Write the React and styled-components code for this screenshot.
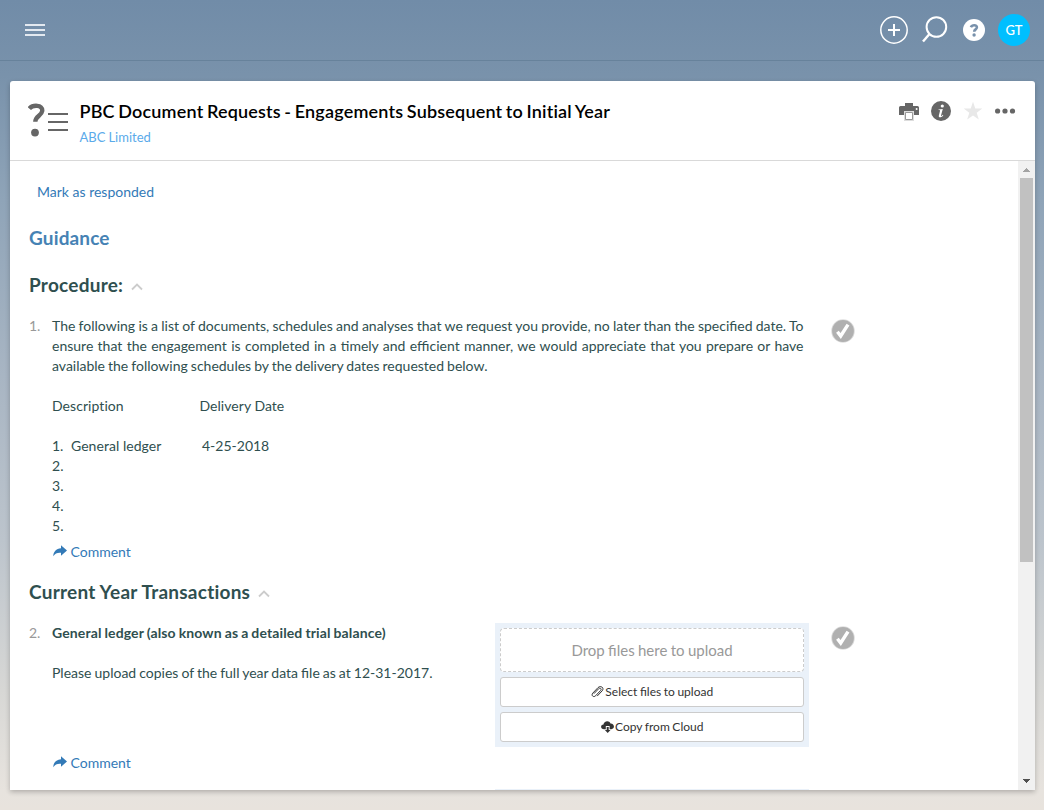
import React from 'react';
import styled, { createGlobalStyle } from 'styled-components';

const GlobalStyle = createGlobalStyle`
  * { box-sizing: border-box; }
  body {
    margin: 0;
    font-family: Lato, "Liberation Sans", sans-serif;
    font-size: 14px;
    line-height: 20px;
    color: #2f4f4f;
    overflow: hidden;
  }
  svg { display: block; flex: none; }
`;

const Page = styled.div`
  display: flex;
  flex-direction: column;
  height: 810px;
  background: linear-gradient(to bottom, #718ca8 0, #7992ab 75px, #8fa4b8 200px, #a8b5c3 375px, #bcc4cc 540px, #d7d7d5 690px, #e7e3de 790px, #e8e3dd 810px);
`;

const TopBar = styled.header`
  display: flex;
  align-items: center;
  justify-content: space-between;
  height: 61px;
  padding: 0 14px 1px 25px;
  border-bottom: 1px solid #67829b;
`;

const TopActions = styled.div`
  display: flex;
  align-items: center;
`;

const Avatar = styled.div`
  width: 32px;
  height: 32px;
  margin-left: 13px;
  border-radius: 50%;
  background: #00bfff;
  color: #fff;
  font-size: 13px;
  font-weight: 500;
  line-height: 33px;
  text-align: center;
`;

const Card = styled.main`
  display: flex;
  flex-direction: column;
  width: 1025px;
  height: 709px;
  margin: 20px 0 0 10px;
  border-radius: 3px 3px 0 0;
  background: #fff;
  box-shadow: 0 2px 5px rgba(0, 0, 0, 0.24);
  overflow: hidden;
`;

const CardHeader = styled.div`
  display: flex;
  height: 80px;
  padding: 20px 19px 0 18px;
  border-bottom: 1px solid #d9d9d9;
`;

const Titles = styled.div`
  flex: 1;
  padding-left: 10.5px;
`;

const Title = styled.h1`
  margin: -1px 0 0;
  color: #000;
  font-size: 18px;
  line-height: 22px;
  font-weight: 600;
  letter-spacing: 0.19px;
  word-spacing: -1.2px;
`;

const Client = styled.div`
  margin-top: 6px;
  color: #5aaaea;
  font-size: 13px;
  line-height: 18px;
  word-spacing: -0.3px;
`;

const HeaderTools = styled.div`
  display: flex;
  height: 20px;
  align-items: center;
`;

const Body = styled.div`
  display: flex;
  flex: 1;
  min-height: 0;
`;

const Content = styled.div`
  width: 1008px;
  height: 629px;
  padding: 21px 0 0 19px;
  overflow: hidden;
`;

const MarkLink = styled.a`
  display: block;
  margin-left: 8px;
  color: #337ab7;
`;

const Guidance = styled.h2`
  margin: 25px 0 0;
  color: #4682b4;
  font-size: 19px;
  line-height: 22px;
  font-weight: 700;
  letter-spacing: 0.15px;
`;

const Section = styled.h2`
  display: flex;
  align-items: center;
  gap: 8px;
  margin: ${(p) => p.$top}px 0 0;
  font-size: 19px;
  line-height: 22px;
  font-weight: 700;
  letter-spacing: 0.24px;
`;

const Item = styled.section`
  display: flex;
  height: ${(p) => p.$height}px;
  margin-top: 20px;
`;

const Number = styled.div`
  width: 23px;
  color: #999;
`;

const Copy = styled.div`
  display: flex;
  flex-direction: column;
  width: ${(p) => p.$width}px;
`;

const Paragraph = styled.p`
  width: ${(p) => (p.$width ? `${p.$width}px` : 'auto')};
  margin: 0 0 20px;
  text-align: justify;
  word-spacing: -0.55px;
`;

const Lead = styled.b`
  letter-spacing: 0.12px;
`;

const Columns = styled.div`
  display: flex;
  margin-bottom: ${(p) => p.$bottom || 0}px;
  white-space: pre;
`;

const Column = styled.div`
  width: ${(p) => p.$width}px;
  letter-spacing: ${(p) => p.$tracking || 0}px;
`;

const CommentLink = styled.a`
  display: flex;
  align-items: center;
  gap: 3.5px;
  margin: auto 0 0 1px;
  color: #337ab7;
`;

const CheckHolder = styled.div`
  margin: 3px 0 0 ${(p) => p.$left}px;
`;

const UploadPanel = styled.div`
  display: flex;
  flex-direction: column;
  gap: 5px;
  width: 314px;
  height: 124px;
  padding: 5px;
  background: #eaf1f9;
`;

const DropZone = styled.div`
  height: 44px;
  border: 1px dashed #ccc;
  border-radius: 4px;
  background: #fff;
  color: #999;
  font-size: 15px;
  line-height: 42px;
  text-align: center;
  word-spacing: -0.5px;
`;

const UploadButton = styled.button`
  display: flex;
  align-items: center;
  justify-content: center;
  gap: ${(p) => p.$gap}px;
  height: 30px;
  padding: 0;
  border: 1px solid #ccc;
  border-radius: 3px;
  background: #fff;
  color: #333;
  font: 12px/18px Lato, sans-serif;
  word-spacing: -0.5px;
`;

const NextPanel = styled.div`
  width: 314px;
  height: 20px;
  margin: 16px 0 0 466px;
  background: #eaf1f9;
`;

const Scrollbar = styled.div`
  display: flex;
  flex-direction: column;
  align-items: center;
  width: 17px;
  background: #f1f1f1;
`;

const Thumb = styled.div`
  width: 13px;
  height: 384px;
  margin-bottom: auto;
  background: #c1c1c1;
`;

const Spaced = styled.span`
  display: block;
  margin-left: ${(p) => p.$left}px;
`;

const MenuIcon = () => (
  <svg width="20" height="12" fill="#e3e9f0"><path d="M0 0h20v2H0zM0 5h20v2H0zM0 10h20v2H0z" /></svg>
);

const AddIcon = () => (
  <svg width="28" height="28" fill="none" stroke="#fff">
    <circle cx="14" cy="14" r="13.2" strokeWidth="1.5" />
    <path d="M14 8v12M8 14h12" strokeWidth="2" />
  </svg>
);

const SearchIcon = () => (
  <svg width="26" height="27" fill="none" stroke="#fff" strokeWidth="2">
    <circle cx="14.4" cy="11" r="9.8" /><path d="M7.5 18L1 25.5" strokeWidth="2.4" />
  </svg>
);

const HelpIcon = () => (
  <svg width="22" height="22">
    <circle cx="11" cy="11" r="11" fill="#fff" />
    <path d="M7.900 8.200C9 5.600 14 5.400 13.900 8.300c0 2.200-2.700 2-2.700 4.500" fill="none" stroke="#7891ab" strokeWidth="2.600" />
    <circle cx="11.100" cy="16" r="1.700" fill="#7891ab" />
  </svg>
);

const QueryIcon = () => (
  <svg width="41" height="38" fill="none" stroke="#666">
    <path d="M1.300 7.600C4.500 3.800 15 3.300 14.200 10c-.5 4.700-7 5.100-6.900 10.800" strokeWidth="4.400" />
    <circle cx="7" cy="31.600" r="3.900" fill="#666" stroke="none" />
    <path d="M20 13h20M20 21h20M20 29h20" strokeWidth="2" />
  </svg>
);

const PrintIcon = () => (
  <svg width="20" height="20">
    <path d="M6 2h8v3H6z" fill="#666" />
    <path d="M1.500 5h17A1.500 1.500 0 0 1 20 6.500V14H0V6.500A1.500 1.500 0 0 1 1.500 5z" fill="#666" />
    <circle cx="17.600" cy="8" r="1" fill="#fff" />
    <path d="M5 10h10v10H5z" fill="#ddd" />
    <path d="M6.500 11.500h7v7h-7z" fill="#fff" stroke="#999" />
  </svg>
);

const InfoIcon = () => (
  <svg width="20" height="20">
    <circle cx="10" cy="10" r="10" fill="#666" />
    <circle cx="11.300" cy="5" r="1.600" fill="#fff" />
    <path d="M7.500 8.400l4.300-.5-1.800 6.600c-.1.8.6.6 1.800-.8l.5.5c-1.500 2.400-4.900 3-4.500.5l1.300-5.100c.1-.6-.3-.7-1.600-.7z" fill="#fff" />
  </svg>
);

const StarIcon = () => (
  <svg width="20" height="20">
    <path d="M10 .8l2.300 6.600 7 .1-5.600 4.200 2.100 6.900-5.800-4.100-5.800 4.100 2.100-6.900L.7 7.500l7-.1z" fill="#e8e8e8" />
  </svg>
);

const MoreIcon = () => (
  <svg width="21" height="20" fill="#666">
    <circle cx="2.600" cy="10" r="2.600" /><circle cx="10" cy="10" r="2.600" /><circle cx="17.500" cy="10" r="2.600" />
  </svg>
);

const Caret = () => (
  <svg width="12" height="11" fill="none" stroke="#ccc" strokeWidth="1.800"><path d="M1 9.500l5-5 5 5" /></svg>
);

const ShareIcon = () => (
  <svg width="14" height="14" fill="#337ab7">
    <path d="M8 .3L14 5.500 8 10.700V7.700C4.500 7.400 2 8.300.3 11.300.2 7 3.200 3.500 8 3.300z" />
  </svg>
);

const CheckIcon = () => (
  <svg width="24" height="24">
    <circle cx="12" cy="12" r="11.800" fill="#ddd" />
    <circle cx="12" cy="12" r="10.900" fill="#b0b0b0" />
    <path d="M6.400 12.800l3.300 4.200L17 5.700" fill="none" stroke="#fff" strokeWidth="3.400" />
  </svg>
);

const ClipIcon = () => (
  <svg width="13" height="14" viewBox="0.500 0.500 13 13" fill="none" stroke="#333">
    <path d="M3.400 8.700l4.800-5c1.400-1.400 3.300.2 2 1.700l-5 5.300c-2.200 2.200-4.900-.3-2.900-2.600l5.200-5.500c2.800-2.700 6.600.4 4.200 3.200l-5 5.300" />
  </svg>
);

const CloudIcon = () => (
  <svg width="13" height="14" fill="#333">
    <path d="M3.200 9.200C-.8 9.300-.8 4.600 2.500 4.600 2.600.8 8.400-.1 9.500 3.500c4.200-.2 4.600 5.600.9 5.700H8.600V6H4.800v3.200z" />
    <path d="M5.700 7h2v3H9.500l-2.800 3-2.800-3h1.800z" />
  </svg>
);

const Arrow = ({ down }) => (
  <svg width="17" height="17" fill={down ? '#505050' : '#a3a3a3'} shapeRendering="crispEdges">
    <path d={down ? 'M5 6h7v1h-1v1h-1v1h-1v1H8V9H7V8H6V7H5z' : 'M5 11h7v-1h-1V9h-1V8H9V7H8v1H7v1H6v1H5z'} />
  </svg>
);

export default function App() {
  return (
    <Page>
      <GlobalStyle />
      <TopBar>
        <MenuIcon />
        <TopActions>
          <AddIcon />
          <Spaced $left={14}><SearchIcon /></Spaced>
          <Spaced $left={15}><HelpIcon /></Spaced>
          <Avatar>GT</Avatar>
        </TopActions>
      </TopBar>
      <Card>
        <CardHeader>
          <QueryIcon />
          <Titles>
            <Title>PBC Document Requests - Engagements Subsequent to Initial Year</Title>
            <Client>ABC Limited</Client>
          </Titles>
          <HeaderTools>
            <PrintIcon />
            <Spaced $left={12}><InfoIcon /></Spaced>
            <Spaced $left={12}><StarIcon /></Spaced>
            <Spaced $left={12}><MoreIcon /></Spaced>
          </HeaderTools>
        </CardHeader>
        <Body>
          <Content>
            <MarkLink>Mark as responded</MarkLink>
            <Guidance>Guidance</Guidance>
            <Section $top={25}>Procedure: <Caret /></Section>
            <Item $height={246}>
              <Number>1.</Number>
              <Copy $width={752}>
                <Paragraph $width={751.5}>
                  The following is a list of documents, schedules and analyses that we request you provide, no later than the specified date. To ensure that the engagement is completed in a timely and efficient manner, we would appreciate that you prepare or have available the following schedules by the delivery dates requested below.
                </Paragraph>
                <Columns $bottom={20}>
                  <Column $width={147.5} $tracking={0.06}>Description</Column>
                  <Column $tracking={0.04}>Delivery Date</Column>
                </Columns>
                <Columns>
                  <Column $width={19}>1.</Column>
                  <Column $width={131} $tracking={0.04}>General ledger</Column>
                  <Column>4-25-2018</Column>
                </Columns>
                {[2, 3, 4, 5].map((n) => <Columns key={n}>{n}.</Columns>)}
                <CommentLink><ShareIcon />Comment</CommentLink>
              </Copy>
              <CheckHolder $left={27}><CheckIcon /></CheckHolder>
            </Item>
            <Section $top={19}>Current Year Transactions <Caret /></Section>
            <Item $height={150}>
              <Number>2.</Number>
              <Copy $width={443}>
                <Paragraph><Lead>General ledger (also known as a detailed trial balance)</Lead></Paragraph>
                <Paragraph>Please upload copies of the full year data file as at 12-31-2017.</Paragraph>
                <CommentLink><ShareIcon />Comment</CommentLink>
              </Copy>
              <UploadPanel>
                <DropZone>Drop files here to upload</DropZone>
                <UploadButton $gap={1.5}><ClipIcon />Select files to upload</UploadButton>
                <UploadButton $gap={1.5}><CloudIcon />Copy from Cloud</UploadButton>
              </UploadPanel>
              <CheckHolder $left={22}><CheckIcon /></CheckHolder>
            </Item>
            <NextPanel />
          </Content>
          <Scrollbar>
            <Arrow /><Thumb /><Arrow down />
          </Scrollbar>
        </Body>
      </Card>
    </Page>
  );
}
